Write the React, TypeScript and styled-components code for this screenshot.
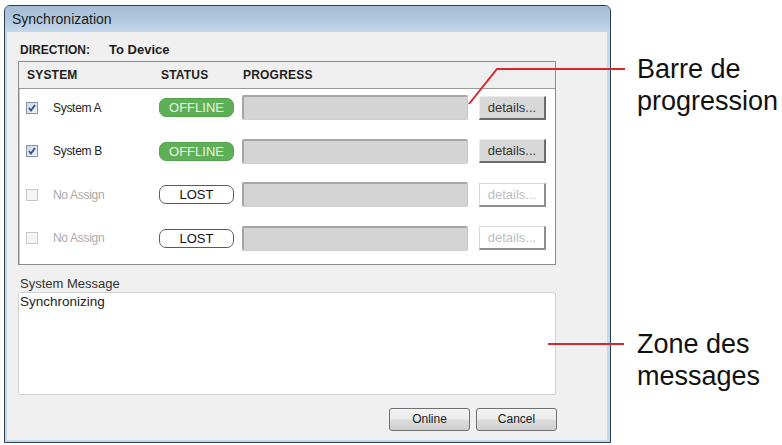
import React from "react";
import styled, { createGlobalStyle, css } from "styled-components";

const GlobalStyle = createGlobalStyle`
  html, body {
    margin: 0;
    padding: 0;
    background: #ffffff;
  }
  body {
    font-family: "Liberation Sans", Arial, sans-serif;
    color: #222;
  }
`;

const Page = styled.div`
  position: relative;
  width: 782px;
  height: 445px;
  display: flex;
  align-items: flex-start;
  padding: 5px 0 0 4px;
  box-sizing: border-box;
  overflow: hidden;
`;

const Window = styled.div`
  width: 607px;
  height: 438px;
  box-sizing: border-box;
  border: 1px solid #2f3e4d;
  border-radius: 6px 6px 0 0;
  background: #c2d8ec;
  display: flex;
  flex-direction: column;
  overflow: hidden;
`;

const TitleBar = styled.div`
  height: 26px;
  flex: none;
  display: flex;
  align-items: center;
  padding-left: 7px;
  font-size: 14px;
  color: #1b1b1b;
  background: linear-gradient(180deg, #a3bdd7 0%, #b4cae0 60%, #c6d9eb 100%);
`;

const Body = styled.div`
  flex: 1;
  margin: 0 3px 2px 2px;
  background: #f0f0f0;
  padding: 11px 0 0 11px;
  display: flex;
  flex-direction: column;
`;

const Direction = styled.div`
  display: flex;
  font-size: 12px;
  font-weight: bold;
  line-height: 14px;
  padding-left: 2px;
  margin-bottom: 4px;
  color: #1e1e1e;
`;

const DirectionValue = styled.span`
  margin-left: 19px;
  font-size: 13px;
`;

const Table = styled.div`
  width: 538px;
  box-sizing: border-box;
  border: 1px solid #8c8c8c;
  box-shadow: inset 1px 1px 0 #c8c8c8;
  background: #ffffff;
`;

const grid = css`
  display: grid;
  grid-template-columns: 140px 83px 226px 78px;
  align-items: center;
`;

const HeaderRow = styled.div`
  ${grid};
  height: 26px;
  background: #efefef;
  border-bottom: 1px solid #9a9a9a;
  font-size: 12px;
  font-weight: bold;
  color: #222;
`;

const HeaderCell = styled.div<{ $pad: number }>`
  padding-left: ${(p) => p.$pad}px;
  letter-spacing: 0.2px;
`;

const Rows = styled.div`
  display: flex;
  flex-direction: column;
  gap: 18.5px;
  padding: 6px 0 13px;
`;

const Row = styled.div`
  ${grid};
  height: 25px;
`;

const SystemCell = styled.div`
  display: flex;
  align-items: center;
  padding-left: 7px;
  gap: 15px;
`;

const Label = styled.span<{ $off?: boolean }>`
  font-size: 12px;
  letter-spacing: -0.3px;
  color: ${(p) => (p.$off ? "#a9a9a9" : "#222")};
`;

const Status = styled.div<{ $tone: "offline" | "lost" }>`
  width: 75px;
  height: 19px;
  box-sizing: border-box;
  border-radius: 7px;
  display: flex;
  align-items: center;
  justify-content: center;
  font-size: 13px;
  ${(p) =>
    p.$tone === "offline"
      ? css`
          background: #5eaf55;
          border: 1px solid #56a34e;
          color: #e9f6e4;
        `
      : css`
          background: #ffffff;
          border: 1px solid #5a5a5a;
          color: #111;
        `}
`;

const Progress = styled.div`
  height: 25px;
  box-sizing: border-box;
  background: #d4d4d4;
  border-top: 2px solid #a6a6a6;
  border-left: 2px solid #a6a6a6;
  border-right: 1px solid #c4c4c4;
  border-bottom: 1px solid #cfcfcf;
  border-radius: 2px;
`;

const DetailsButton = styled.button<{ $off?: boolean }>`
  margin-left: 11px;
  width: 67px;
  height: 24px;
  padding: 0;
  font-family: "Liberation Sans", Arial, sans-serif;
  font-size: 13px;
  border-style: solid;
  border-width: 1px 2px 2px 1px;
  ${(p) =>
    p.$off
      ? css`
          background: #ffffff;
          color: #bdbdbd;
          border-color: #d8d8d8 #8e8e8e #8e8e8e #d8d8d8;
        `
      : css`
          background: #d8d8d8;
          color: #333;
          border-color: #ececec #6a6a6a #6a6a6a #ececec;
        `}
`;

const MessageLabel = styled.div`
  margin-top: 11px;
  font-size: 13px;
  line-height: 15px;
  color: #333;
  padding-left: 2px;
`;

const MessageBox = styled.div`
  margin-top: 1px;
  width: 538px;
  height: 103px;
  box-sizing: border-box;
  background: #ffffff;
  border: 1px solid #d2d2d2;
  border-radius: 2px;
  padding: 1px 0 0 1px;
  font-size: 13.5px;
  line-height: 16px;
  color: #222;
`;

const Buttons = styled.div`
  width: 539px;
  display: flex;
  justify-content: flex-end;
  gap: 6px;
  margin-top: 13px;
`;

const DialogButton = styled.button`
  width: 81px;
  height: 23px;
  padding: 0;
  box-sizing: border-box;
  border: 1px solid #707070;
  border-radius: 3px;
  background: linear-gradient(180deg, #f3f3f3 0%, #ebebeb 48%, #dddddd 52%, #cfcfcf 100%);
  font-family: "Liberation Sans", Arial, sans-serif;
  font-size: 12px;
  color: #1a1a1a;
`;

const Callouts = styled.div`
  flex: 1;
  display: flex;
  flex-direction: column;
  padding-left: 26px;
`;

const Callout = styled.div<{ $top: number }>`
  margin-top: ${(p) => p.$top}px;
  font-size: 27px;
  line-height: 32px;
  color: #111;
  white-space: nowrap;
`;

const Leaders = styled.svg`
  position: absolute;
  left: 0;
  top: 0;
  pointer-events: none;
`;

function CheckBox({ checked }: { checked: boolean }) {
  return (
    <svg width="12" height="12" viewBox="0 0 12 12">
      <defs>
        <linearGradient id="cbOn" x1="0" y1="0" x2="1" y2="1">
          <stop offset="0" stopColor="#c9d3e3" />
          <stop offset="1" stopColor="#f4f6fa" />
        </linearGradient>
      </defs>
      <rect
        x="0.5"
        y="0.5"
        width="11"
        height="11"
        fill={checked ? "url(#cbOn)" : "#f4f4f4"}
        stroke={checked ? "#8a94a6" : "#c8c8c8"}
      />
      {checked && (
        <path d="M3 6 L5 8.5 L9 3" fill="none" stroke="#2c4a9a" strokeWidth="1.8" />
      )}
    </svg>
  );
}

type Sys = { name: string; assigned: boolean };

const systems: Sys[] = [
  { name: "System A", assigned: true },
  { name: "System B", assigned: true },
  { name: "No Assign", assigned: false },
  { name: "No Assign", assigned: false },
];

export default function App() {
  return (
    <Page>
      <GlobalStyle />
      <Window>
        <TitleBar>Synchronization</TitleBar>
        <Body>
          <Direction>
            DIRECTION:<DirectionValue>To Device</DirectionValue>
          </Direction>
          <Table>
            <HeaderRow>
              <HeaderCell $pad={8}>SYSTEM</HeaderCell>
              <HeaderCell $pad={2}>STATUS</HeaderCell>
              <HeaderCell $pad={1}>PROGRESS</HeaderCell>
              <div />
            </HeaderRow>
            <Rows>
              {systems.map((s, i) => (
                <Row key={i}>
                  <SystemCell>
                    <CheckBox checked={s.assigned} />
                    <Label $off={!s.assigned}>{s.name}</Label>
                  </SystemCell>
                  <Status $tone={s.assigned ? "offline" : "lost"}>
                    {s.assigned ? "OFFLINE" : "LOST"}
                  </Status>
                  <Progress />
                  <DetailsButton $off={!s.assigned}>details...</DetailsButton>
                </Row>
              ))}
            </Rows>
          </Table>
          <MessageLabel>System Message</MessageLabel>
          <MessageBox>Synchronizing</MessageBox>
          <Buttons>
            <DialogButton>Online</DialogButton>
            <DialogButton>Cancel</DialogButton>
          </Buttons>
        </Body>
      </Window>
      <Callouts>
        <Callout $top={48}>
          Barre de
          <br />
          progression
        </Callout>
        <Callout $top={211}>
          Zone des
          <br />
          messages
        </Callout>
      </Callouts>
      <Leaders width="782" height="445">
        <path d="M469 104 L497 69 L625 69" fill="none" stroke="#d6262e" strokeWidth="2" />
        <path d="M548 344 L624 344" fill="none" stroke="#d6262e" strokeWidth="2" />
      </Leaders>
    </Page>
  );
}
